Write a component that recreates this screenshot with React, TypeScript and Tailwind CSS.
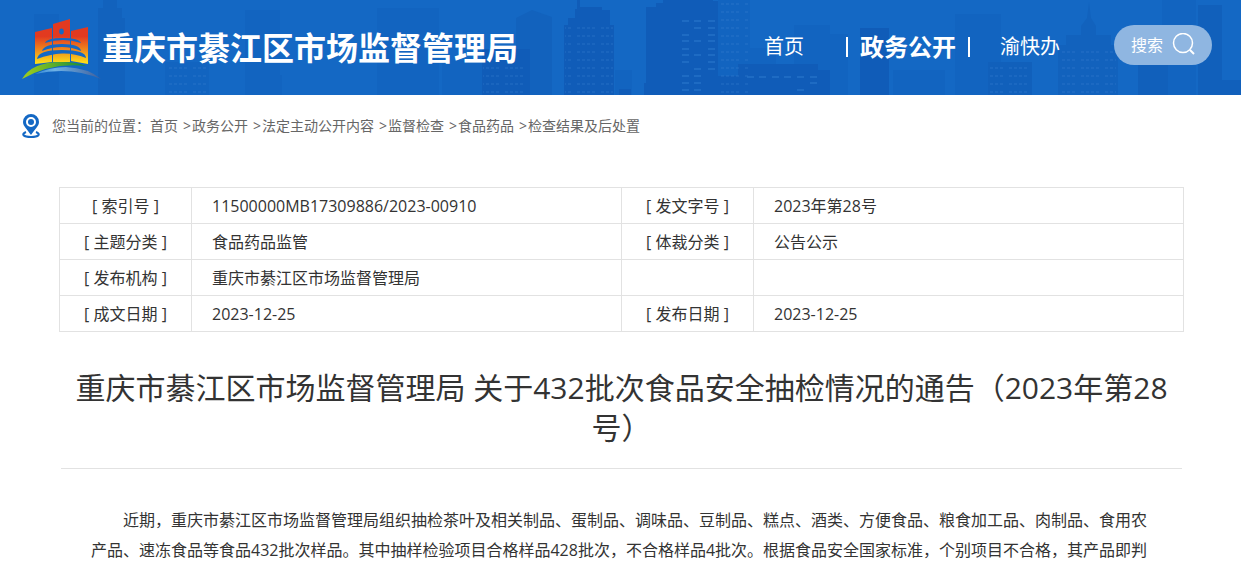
import { Fragment } from 'react';

interface Block {
  x: number;
  y: number;
  w: number;
  h: number;
}

interface Field {
  label: string;
  value: string;
}

// far buildings are lighter, near ones darker
const FAR_BLOCKS: Block[] = [
  { x: 34, y: 14, w: 25, h: 81 },
  { x: 165, y: 62, w: 44, h: 33 },
  { x: 245, y: 10, w: 35, h: 85 },
  { x: 262, y: 75, w: 20, h: 20 },
  { x: 377, y: 8, w: 62, h: 87 },
  { x: 442, y: 60, w: 42, h: 35 },
  { x: 615, y: 70, w: 17, h: 25 },
  { x: 718, y: 0, w: 32, h: 95 },
  { x: 748, y: 48, w: 28, h: 47 },
  { x: 794, y: 25, w: 36, h: 70 },
  { x: 830, y: 34, w: 18, h: 61 },
  { x: 893, y: 70, w: 52, h: 25 },
  { x: 955, y: 14, w: 46, h: 81 },
  { x: 1162, y: 0, w: 34, h: 95 },
];

const NEAR_BLOCKS: Block[] = [
  { x: 482, y: 49, w: 48, h: 46 },
  { x: 738, y: 64, w: 80, h: 31 },
  { x: 818, y: 70, w: 12, h: 25 },
  { x: 705, y: 76, w: 40, h: 19 },
  { x: 860, y: 28, w: 29, h: 67 },
  { x: 644, y: 83, w: 9, h: 12 },
  { x: 619, y: 89, w: 12, h: 6 },
];

const MID_BLOCKS: Block[] = [
  { x: 988, y: 62, w: 44, h: 33 },
  { x: 1138, y: 64, w: 30, h: 31 },
  { x: 1198, y: 5, w: 24, h: 90 },
  { x: 1216, y: 80, w: 25, h: 15 },
];

const CRUMBS = ['首页', '政务公开', '法定主动公开内容', '监督检查', '食品药品', '检查结果及后处置'];

const FIELD_ROWS: [Field, Field][] = [
  [
    { label: '索引号', value: '11500000MB17309886/2023-00910' },
    { label: '发文字号', value: '2023年第28号' },
  ],
  [
    { label: '主题分类', value: '食品药品监管' },
    { label: '体裁分类', value: '公告公示' },
  ],
  [
    { label: '发布机构', value: '重庆市綦江区市场监督管理局' },
    { label: '', value: '' },
  ],
  [
    { label: '成文日期', value: '2023-12-25' },
    { label: '发布日期', value: '2023-12-25' },
  ],
];

const BODY =
  '近期，重庆市綦江区市场监督管理局组织抽检茶叶及相关制品、蛋制品、调味品、豆制品、糕点、酒类、方便食品、粮食加工品、肉制品、食用农产品、速冻食品等食品432批次样品。其中抽样检验项目合格样品428批次，不合格样品4批次。根据食品安全国家标准，个别项目不合格，其产品即判';

function Blocks({ blocks, fill }: { blocks: Block[]; fill: string }) {
  return (
    <g fill={fill}>
      {blocks.map((b) => (
        <rect key={`${b.x}-${b.y}`} x={b.x} y={b.y} width={b.w} height={b.h} />
      ))}
    </g>
  );
}

function Skyline() {
  return (
    <svg
      className="absolute inset-0 h-full w-full"
      viewBox="0 0 1241 95"
      preserveAspectRatio="xMidYMid slice"
      aria-hidden="true"
    >
      <defs>
        <pattern id="windows" width="24" height="8" patternUnits="userSpaceOnUse">
          <path d="M1 4h3M6 4h3M11 4h3M16 4h3" stroke="#2f7ace" strokeWidth="2" opacity="0.3" />
        </pattern>
      </defs>
      <Blocks blocks={FAR_BLOCKS} fill="#1264c0" />
      <g fill="#1262bd">
        <path d="M98 8h5V0h14v8h5v10h3v77H98zM516 18l16-8 20 7v78h-36z" />
        <path d="M1087 18l2-16 2 16 5 8v9h15v10h7v50h-60V45h8V35h15v-9z" />
      </g>
      <Blocks blocks={MID_BLOCKS} fill="#1160bb" />
      <Blocks blocks={NEAR_BLOCKS} fill="#105cb8" />
      <g fill="#105cb8">
        <path d="M564 25h4v-7h7v-9h2V0h3v7h22v3h8v15h4v70h-50z" />
        <path d="M646 7h10V3h7V0h50v1h5v94h-72z" />
      </g>
      <g fill="url(#windows)">
        <path d="M565 26h48v69h-48zM483 66h46v29h-46zM166 66h42v29h-42zM989 66h42v29h-42zM1060 50h56v45h-56zM719 0h30v95h-30z" />
      </g>
      <g stroke="#2472c8" strokeWidth="2" opacity="0.7">
        <path d="M682 21h7M694 21h7M708 21h7M694 28h7M708 28h7M682 35h7M708 35h7M682 41h7M694 41h7M708 41h7M682 49h7M708 49h7M682 55h7M694 55h7M708 55h7M682 62h7M708 62h7M694 69h7M708 69h7M682 76h7M694 76h7M682 83h7M694 83h7M682 90h7M694 90h7" />
        <path d="M747 77h7M759 77h7M772 77h7M784 77h7M797 77h7M810 77h7M810 83h7M797 90h7" />
      </g>
    </svg>
  );
}

function Logo() {
  return (
    <svg className="h-16 w-20 shrink-0" viewBox="0 -2 80 64" aria-hidden="true">
      <defs>
        <linearGradient id="tower" x1="0" y1="0" x2="0" y2="46" gradientUnits="userSpaceOnUse">
          <stop offset="0.4" stopColor="#e23a20" />
          <stop offset="0.7" stopColor="#f08a1c" />
          <stop offset="1" stopColor="#fde51a" />
        </linearGradient>
        <linearGradient id="hill" x1="0" x2="1">
          <stop offset="0" stopColor="#a2cf1c" />
          <stop offset="1" stopColor="#128a3c" />
        </linearGradient>
        <linearGradient id="river" x1="0" x2="1">
          <stop offset="0" stopColor="#2f86d6" />
          <stop offset="0.3" stopColor="#6fb2e6" />
          <stop offset="1" stopColor="#3f5f9c" />
        </linearGradient>
      </defs>
      <path d="M13 14l17-4v34l-17 2zM31 6l17-5v43H31zM49 13l17-4v37l-17-3z" fill="url(#tower)" />
      <ellipse cx="39.5" cy="13.5" rx="2.300" ry="3" fill="#1468c4" />
      <g fill="#1468c4">
        <path d="M23 25Q25 20 41 20T59 25Q50 22 41 22T23 25z" />
        <path d="M20 33Q22 26 40 26T59 33Q50 29 40 29T20 33z" />
        <path d="M15 41Q16 32 40 32T64 40Q52 35 40 35.500T15 41z" />
      </g>
      <path d="M0 61Q10 44 39 44Q56 44 64 48Q30 44 0 61z" fill="url(#hill)" />
      <path d="M13 56Q28 49 44 49Q66 50 79 61Q48 48 13 56z" fill="url(#river)" />
    </svg>
  );
}

function PinIcon() {
  return (
    <svg className="h-6 w-[18px] shrink-0" viewBox="0 0 18 24" aria-hidden="true">
      <path
        fillRule="evenodd"
        d="M9 0a8 8 0 0 0-8 8c0 4 4 7 8 13 4-6 8-9 8-13a8 8 0 0 0-8-8zm0 3a5 5 0 1 1 0 10A5 5 0 0 1 9 3z"
        fill="#1468c4"
      />
      <circle cx="9" cy="8" r="3" fill="#1468c4" />
      <path d="M4 18c-5 2-3 5 5 5s10-3 5-5" fill="none" stroke="#1468c4" strokeWidth="2" />
    </svg>
  );
}

function Header() {
  return (
    <header className="relative h-[95px] overflow-hidden bg-[#1468c4] text-white">
      <Skyline />
      <div className="relative flex h-full items-center pr-[29px] pl-[22px]">
        <a href="#" className="flex items-center">
          <Logo />
          <span className="text-[32px] leading-10 font-bold whitespace-nowrap">
            重庆市綦江区市场监督管理局
          </span>
        </a>
        <nav className="mb-0.5 ml-auto flex items-center text-xl whitespace-nowrap">
          <a href="#" className="mr-[42px]">
            首页
          </a>
          <span className="h-5 w-0.5 bg-white" />
          <a href="#" className="mx-3 text-2xl font-bold">
            政务公开
          </a>
          <span className="h-5 w-0.5 bg-white" />
          <a href="#" className="ml-[30px]">
            渝快办
          </a>
        </nav>
        <button
          type="button"
          className="mb-1.5 ml-[54px] flex h-10 w-[98px] shrink-0 items-center rounded-full bg-[#8fb6e1] pl-[17px] text-base"
        >
          搜索
          <svg className="ml-[9px] h-6 w-6" viewBox="0 0 24 24" fill="none" stroke="white" aria-hidden="true">
            <circle cx="11" cy="10" r="9.500" strokeWidth="1.500" />
            <path d="M18 17l4 4" strokeWidth="2" />
          </svg>
        </button>
      </div>
    </header>
  );
}

function Breadcrumb() {
  return (
    <nav aria-label="当前位置" className="flex h-[62px] items-center pl-[22px] text-sm text-[#666]">
      <PinIcon />
      <span className="ml-3">您当前的位置：</span>
      {CRUMBS.map((crumb, i) => (
        <Fragment key={crumb}>
          {i > 0 && <span className="ml-[5px] w-[9px]">&gt;</span>}
          <a href="#">{crumb}</a>
        </Fragment>
      ))}
    </nav>
  );
}

function FieldTable() {
  return (
    <table className="w-full table-fixed border-collapse">
      <colgroup>
        <col className="w-[132px]" />
        <col />
        <col className="w-[132px]" />
        <col />
      </colgroup>
      <tbody>
        {FIELD_ROWS.map((row, i) => (
          <tr key={i} className="h-9">
            {row.map((field, j) => (
              <Fragment key={j}>
                <th scope="row" className="border border-[#e2e2e2] text-center font-normal">
                  {field.label && `[ ${field.label} ]`}
                </th>
                <td className="border border-[#e2e2e2] pl-5">{field.value}</td>
              </Fragment>
            ))}
          </tr>
        ))}
      </tbody>
    </table>
  );
}

export default function App() {
  return (
    <div className="bg-white font-['Open_Sans','Noto_Sans_CJK_SC',sans-serif] text-base text-[#333]">
      <Header />
      <Breadcrumb />
      <main className="pt-[30px] pr-[57px] pl-[59px]">
        <FieldTable />
        <h1 className="mx-0.5 mt-9 border-b border-[#e2e2e2] pb-5 text-center text-3xl leading-10">
          重庆市綦江区市场监督管理局 关于432批次食品安全抽检情况的通告（2023年第28号）
        </h1>
        <p className="mx-8 mt-9 indent-8 leading-[30px]">{BODY}</p>
      </main>
    </div>
  );
}
